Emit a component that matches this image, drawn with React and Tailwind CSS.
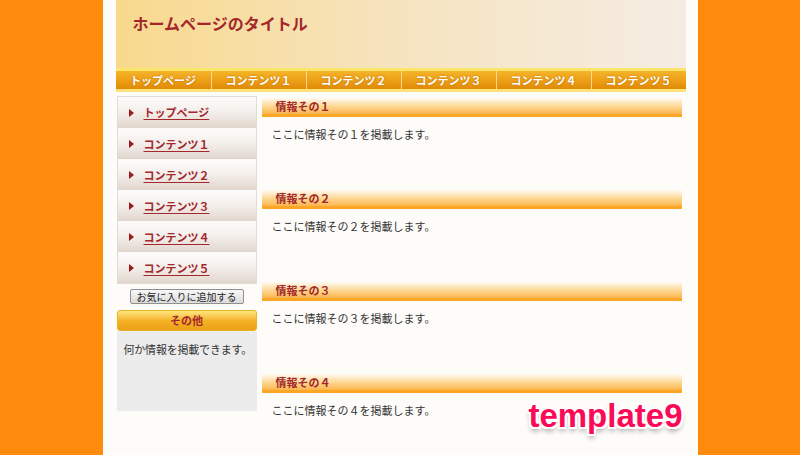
import React from 'react';

const navItems = ['トップページ', 'コンテンツ１', 'コンテンツ２', 'コンテンツ３', 'コンテンツ４', 'コンテンツ５'];
const sideItems = ['トップページ', 'コンテンツ１', 'コンテンツ２', 'コンテンツ３', 'コンテンツ４', 'コンテンツ５'];
const sections = ['１', '２', '３', '４'];

const jp = { fontFamily: '"Noto Sans CJK JP", "Noto Sans", sans-serif' };

function App() {
  return (
    <div className="flex min-h-[455px] justify-center bg-[#ff8a0c]" style={jp}>
      <div className="relative h-[455px] w-[595px] bg-[#fdfcf9] pl-[13px] pr-[12px]">
        {/* header */}
        <div className="flex h-[68px] items-start bg-gradient-to-r from-[#f8d98c] via-[#f6e4c0] to-[#f5ece3] pl-[17px] pt-[12px]">
          <h1 className="text-[16px] font-bold leading-[22px] text-[#a3272c]">ホームページのタイトル</h1>
        </div>

        {/* global nav */}
        <div className="flex h-[24px] border-b-[3px] border-t-[3px] border-b-[#fde27a] border-t-[#fde56c] bg-gradient-to-b from-[#f4b52a] via-[#eda016] to-[#e08a08]">
          {navItems.map((item, i) => (
            <div
              key={item}
              className={`flex w-[95px] items-center justify-center text-[11px] font-bold leading-none text-white [text-shadow:0_0_2px_#b86a00] ${
                i > 0 ? 'border-l border-l-[#fbd88a]' : ''
              }`}>
              {item}
            </div>
          ))}
        </div>

        <div className="mt-[4px] flex">
          {/* sidebar */}
          <div className="ml-[1px] w-[140px]">
            <ul className="border border-[#e3dcd6] bg-white">
              {sideItems.map((item, i) => (
                <li
                  key={item}
                  className={`flex h-[31px] items-center bg-gradient-to-b from-[#fdfcfb] via-[#f3eeea] to-[#e1d6cd] pl-[11px] ${
                    i > 0 ? 'border-t border-t-[#fbf9f7]' : ''
                  }`}>
                  <span className="mr-[10px] h-0 w-0 border-y-[4px] border-l-[5px] border-y-transparent border-l-[#9a1a1e]" />
                  <a href="#" className="text-[11px] font-bold text-[#a3272c] underline underline-offset-2">
                    {item}
                  </a>
                </li>
              ))}
            </ul>

            <div className="mt-[5px] flex justify-center">
              <button className="h-[15px] w-[114px] rounded-[2px] border border-[#8f8f8f] bg-gradient-to-b from-[#f8f8f8] to-[#dcdcdc] text-[10px] leading-none text-[#222]">
                お気に入りに追加する
              </button>
            </div>

            <div className="mt-[6px]">
              <div className="flex h-[21px] items-center justify-center rounded-[3px] border border-[#e7b422] bg-gradient-to-b from-[#fde67d] via-[#f5b324] to-[#eba018] text-[11px] font-bold text-[#a3272c]">
                その他
              </div>
              <div className="h-[80px] whitespace-nowrap bg-[#ececec] px-[7px] pt-[10px] text-[11px] tracking-[-0.2px] text-[#333]">
                何か情報を掲載できます。
              </div>
            </div>
          </div>

          {/* main column */}
          <div className="ml-[5px] mt-[2px] w-[420px]">
            {sections.map((n) => (
              <div key={n} className="h-[92px]">
                <h2 className="flex h-[19px] items-center border-b-[3px] border-b-[#fca628] bg-gradient-to-b from-[#fefaf2] via-[#fdd995] to-[#fcb548] pl-[14px] text-[11px] font-bold leading-none text-[#a3272c]">
                  情報その{n}
                </h2>
                <p className="mt-[10px] pl-[10px] text-[11px] leading-[14px] text-[#333]">ここに情報その{n}を掲載します。</p>
              </div>
            ))}
          </div>
        </div>

        <div
          className="absolute bottom-[23px] right-[15px] text-[33px] font-bold leading-none text-[#fb0a57] [text-shadow:-2px_-2px_0_#fff,2px_-2px_0_#fff,-2px_2px_0_#fff,2px_2px_0_#fff,0_2px_0_#fff,0_4px_5px_#999]"
          style={{ fontFamily: '"Liberation Sans", Arial, sans-serif' }}>
          template9
        </div>
      </div>
    </div>
  );
}

export default App;
